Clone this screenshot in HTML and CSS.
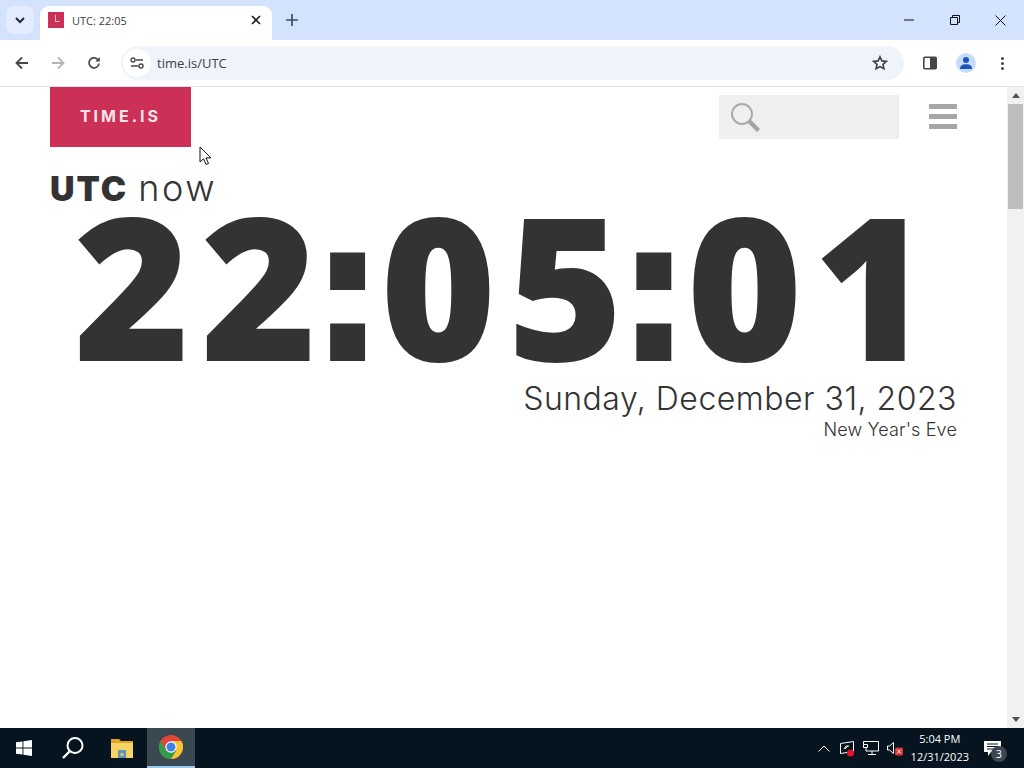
FILE: index.html
```html
<!DOCTYPE html>
<html lang="en">
<head>
    <meta charset="UTF-8">
    <meta name="viewport" content="width=device-width, initial-scale=1.0">
    <title>UTC: 22:05</title>
    <link rel="stylesheet" href="styles.css">
</head>
<body>
    <div class="tabstrip">
        <div class="tab-menu">
            <svg width="12" height="8" viewBox="0 0 12 8"><path d="M2 2l4 4 4-4" fill="none" stroke="#1f2a44" stroke-width="2"/></svg>
        </div>
        <div class="tab">
            <svg class="favicon" width="16" height="16" viewBox="0 0 16 16"><rect width="16" height="16" fill="#cc2f57"/><path d="M7.5 3v6.5h4" fill="none" stroke="#f3c6d2" stroke-width="1"/></svg>
            <span class="tab-title">UTC: 22:05</span>
            <svg class="tab-close" width="10" height="10" viewBox="0 0 10 10"><path d="M1 1l8 8M9 1l-8 8" stroke="#1f1f1f" stroke-width="1.6"/></svg>
        </div>
        <svg class="new-tab" width="12" height="12" viewBox="0 0 12 12"><path d="M6 0v12M0 6h12" stroke="#3d4a68" stroke-width="1.7"/></svg>
        <div class="win-buttons">
            <svg width="10" height="10" viewBox="0 0 10 10"><path d="M0 5h10" stroke="#111" stroke-width="1"/></svg>
            <svg width="10" height="10" viewBox="0 0 10 10"><path d="M.5 2.500h7v7h-7zM2.500 2.500v-2h7v7h-2" fill="none" stroke="#111" stroke-width="1"/></svg>
            <svg width="11" height="11" viewBox="0 0 11 11"><path d="M.5.5l10 10M10.500.5l-10 10" stroke="#111" stroke-width="1"/></svg>
        </div>
    </div>

    <div class="toolbar">
        <svg class="nav-icon" width="14" height="14" viewBox="0 0 14 14"><path d="M13 7H2M7 1.500L1.500 7 7 12.500" fill="none" stroke="#444746" stroke-width="1.800"/></svg>
        <svg class="nav-icon" width="14" height="14" viewBox="0 0 14 14"><path d="M1 7h11M7 1.500L12.500 7 7 12.500" fill="none" stroke="#b3b5b8" stroke-width="1.800"/></svg>
        <svg class="nav-icon" width="14" height="14" viewBox="0 0 14 14"><path d="M12 7.500A5 5 0 1 1 10.500 3.300" fill="none" stroke="#444746" stroke-width="1.700"/><path d="M12.800 1v4.500H8.300z" fill="#444746"/></svg>
        <div class="omnibox">
            <div class="site-icon">
                <svg width="14" height="12" viewBox="0 0 14 12"><circle cx="3" cy="3" r="2" fill="none" stroke="#444746" stroke-width="1.400"/><path d="M6 3h7M1 9h7" stroke="#444746" stroke-width="1.400"/><circle cx="11" cy="9" r="2" fill="none" stroke="#444746" stroke-width="1.400"/></svg>
            </div>
            <span class="url">time.is/UTC</span>
            <svg class="star" width="16" height="16" viewBox="0 0 16 16"><path d="M8 1.800l1.900 4.100 4.400.5-3.300 3 .9 4.400L8 11.600l-3.900 2.200.9-4.400-3.300-3 4.400-.5z" fill="none" stroke="#3c4043" stroke-width="1.600"/></svg>
        </div>
        <svg class="side-panel" width="14" height="14" viewBox="0 0 14 14"><rect x=".8" y="1.300" width="12.400" height="11.400" rx="1" fill="none" stroke="#444746" stroke-width="1.600"/><rect x="7" y="1.300" width="6" height="11.400" fill="#444746"/></svg>
        <div class="avatar">
            <svg width="14" height="14" viewBox="0 0 14 14"><circle cx="7" cy="4" r="3" fill="#1a56b8"/><path d="M1 13c0-3.500 2.500-4.800 6-4.800s6 1.300 6 4.800z" fill="#1a56b8"/></svg>
        </div>
        <div class="dots"><i></i><i></i><i></i></div>
    </div>

    <div class="viewport">
        <div class="page">
            <header class="site-header">
                <a class="logo">TIME.IS</a>
                <div class="header-right">
                    <div class="search">
                        <svg width="32" height="32" viewBox="0 0 32 32"><circle cx="12" cy="12" r="10" fill="none" stroke="#ababab" stroke-width="2"/><path d="M19 19l2-1 9 9-3 3-9-9z" fill="#a3a3a3"/></svg>
                    </div>
                    <div class="hamburger"><i></i><i></i><i></i></div>
                </div>
            </header>
            <h1 class="now"><b>UTC</b> <span>now</span></h1>
            <div class="clock">22<span class="colon">:</span>05<span class="colon">:</span>01</div>
            <div class="date">Sunday, December 31, 2023</div>
            <div class="holiday">New Year's Eve</div>
        </div>
        <div class="scrollbar">
            <span class="arrow-up"></span>
            <div class="thumb"></div>
            <span class="arrow-down"></span>
        </div>
        <svg class="cursor" width="14" height="20" viewBox="0 0 14 20"><path d="M1 1v15l3.500-3.200 2.500 5.700 2.500-1.100-2.500-5.500h5z" fill="#fff" stroke="#111" stroke-width="1"/></svg>
    </div>

    <div class="taskbar">
        <div class="task-left">
            <div class="task-item">
                <svg width="16" height="16" viewBox="0 0 16 16"><path d="M0 2.300l6.500-.9v6.200H0zM7.400 1.300L16 0v7.600H7.400zM0 8.500h6.500v6.100L0 13.700zM7.400 8.500H16V16l-8.600-1.200z" fill="#fff"/></svg>
            </div>
            <div class="task-item">
                <svg width="24" height="24" viewBox="0 0 24 24"><circle cx="14" cy="9.500" r="7.500" fill="none" stroke="#fff" stroke-width="2"/><path d="M9 15l-7 7" stroke="#fff" stroke-width="2.400"/></svg>
            </div>
            <div class="task-item">
                <svg width="22" height="20" viewBox="0 0 22 20"><path d="M0 1h8l2 2h12v5H0z" fill="#e0a526"/><rect y="5" width="22" height="15" fill="#f6d365"/><rect x="7" y="12" width="8" height="8" fill="#5d93b5"/><rect x="9.500" y="15" width="3" height="3" fill="#d9c27a"/></svg>
            </div>
            <div class="task-item active">
                <svg width="24" height="24" viewBox="0 0 24 24">
                    <circle cx="12" cy="12" r="12" fill="#e2463a"/>
                    <path d="M12 24a12 12 0 0 1-10.400-18l6 10.400h9z" fill="#2f9e4b"/>
                    <path d="M12 24a12 12 0 0 0 10.400-18H12l5 10z" fill="#f7c531"/>
                    <circle cx="12" cy="12" r="5.700" fill="#fff"/>
                    <circle cx="12" cy="12" r="4.500" fill="#3f82e8"/>
                </svg>
            </div>
        </div>
        <div class="tray">
            <svg width="12" height="7" viewBox="0 0 12 7"><path d="M.5 6.500L6 1l5.500 5.500" fill="none" stroke="#fff" stroke-width="1"/></svg>
            <svg width="17" height="17" viewBox="0 0 17 17"><path d="M2.500 3.500l13-2v10l-13 2z" fill="none" stroke="#fff" stroke-width="1"/><path d="M6 9l2-3h3M10 6l-3 3" fill="none" stroke="#fff" stroke-width="1"/><circle cx="12.500" cy="13" r="3.500" fill="#e8112d"/></svg>
            <svg width="16" height="15" viewBox="0 0 16 15"><path d="M.5 3.500V.5h5M5.500.5h10v9.500H3v-3M.5 3.500h4v3h-4zM9 10v3M5 13.500h8" fill="none" stroke="#fff" stroke-width="1"/></svg>
            <svg width="16" height="15" viewBox="0 0 16 15"><path d="M.5 5v4h2l4 3.500V1.500L2.500 5z" fill="none" stroke="#fff" stroke-width="1"/><rect x="8" y="6.500" width="8" height="8" rx="1.500" fill="#d8342f"/><path d="M10 8.500l4 4M14 8.500l-4 4" stroke="#fff" stroke-width="1"/></svg>
            <div class="tray-clock">
                <span>5:04 PM</span>
                <span>12/31/2023</span>
            </div>
            <div class="notify">
                <svg width="17" height="15" viewBox="0 0 17 15"><path d="M0 0h17v11H7l-3 4v-4H0z" fill="#fff"/><path d="M3 3h11M3 5.500h11M3 8h7" stroke="#05141f" stroke-width="1"/></svg>
                <span class="notify-count">3</span>
            </div>
        </div>
    </div>
</body>
</html>
```

FILE: styles.css
```css
html, body {
    margin: 0;
    padding: 0;
    height: 100%;
    overflow: hidden;
}
body {
    width: 1024px;
    height: 768px;
    display: flex;
    flex-direction: column;
    font-family: "Open Sans", "Noto Sans", sans-serif;
    background: white;
}

/* browser chrome */
.tabstrip {
    height: 40px;
    flex: none;
    display: flex;
    align-items: flex-end;
    background-color: #d3e3fd;
}
.tab-menu {
    width: 28px;
    height: 28px;
    margin: 0 6px 6px 6px;
    border-radius: 8px;
    background: #e3ecfc;
    display: flex;
    align-items: center;
    justify-content: center;
}
.tab {
    width: 232px;
    height: 34px;
    box-sizing: border-box;
    padding: 0 11px 6px 8px;
    background: white;
    border-radius: 9px 9px 0 0;
    display: flex;
    align-items: center;
}
.tab-title {
    flex: 1;
    margin-left: 8px;
    font-size: 11px;
    color: #3c4043;
}
.new-tab {
    margin: 0 0 14px 14px;
}
.win-buttons {
    margin-left: auto;
    width: 138px;
    height: 40px;
    box-sizing: border-box;
    padding: 0 18px 0 18px;
    display: flex;
    align-items: center;
    justify-content: space-between;
}
.toolbar {
    height: 47px;
    flex: none;
    box-sizing: border-box;
    border-bottom: 1px solid #e1e3e6;
    background: white;
    display: flex;
    align-items: center;
    padding-left: 15px;
}
.nav-icon {
    margin-right: 22px;
}
.omnibox {
    width: 783px;
    height: 34px;
    margin-left: -2px;
    border-radius: 17px;
    background: #eff3fa;
    display: flex;
    align-items: center;
    box-sizing: border-box;
    padding: 0 16px 0 2px;
}
.site-icon {
    width: 28px;
    height: 28px;
    border-radius: 50%;
    background: white;
    display: flex;
    align-items: center;
    justify-content: center;
}
.url {
    flex: 1;
    margin-left: 6px;
    font-size: 13px;
    color: #3c4043;
}
.side-panel {
    margin-left: 19px;
}
.avatar {
    width: 20px;
    height: 20px;
    margin-left: 19px;
    border-radius: 50%;
    background: #c7dcfb;
    display: flex;
    align-items: center;
    justify-content: center;
}
.dots {
    margin-left: 25px;
    display: flex;
    flex-direction: column;
    gap: 2px;
}
.dots i {
    display: block;
    width: 3px;
    height: 3px;
    border-radius: 50%;
    background: #444746;
}

/* page */
.viewport {
    flex: 1;
    position: relative;
    display: flex;
    min-height: 0;
}
.page {
    flex: 1;
    min-width: 0;
    box-sizing: border-box;
    padding: 0 50px;
}
.site-header {
    display: flex;
    justify-content: space-between;
    align-items: flex-start;
}
.logo {
    display: block;
    width: 141px;
    height: 60px;
    line-height: 58px;
    text-align: center;
    background-color: #cc3057;
    color: #f8e4e9;
    font-family: "Inter", sans-serif;
    font-weight: 700;
    font-size: 16px;
    letter-spacing: 3px;
}
.header-right {
    display: flex;
    align-items: flex-start;
    margin-right: -1px;
}
.search {
    width: 180px;
    height: 44px;
    margin-top: 8px;
    background: #efefef;
    display: flex;
    align-items: center;
    padding: 2px 0 0 11px;
    box-sizing: border-box;
}
.hamburger {
    margin: 17px 1px 0 30px;
    display: flex;
    flex-direction: column;
    gap: 5px;
}
.hamburger i {
    display: block;
    width: 28px;
    height: 5px;
    background: #a6a6a6;
}
.now {
    margin: 21px 0 0 0;
    font-family: "Inter", sans-serif;
    font-size: 36px;
    line-height: 40px;
    font-weight: 300;
    color: #333;
}
.now b {
    font-size: 34px;
    font-weight: 900;
    letter-spacing: 2px;
}
.now span {
    letter-spacing: 2.5px;
}
.clock {
    margin: -20px 0 0 24px;
    font-family: "Open Sans", sans-serif;
    font-weight: 800;
    font-size: 198px;
    line-height: 190px;
    letter-spacing: 11px;
    color: #333;
    white-space: nowrap;
}
.colon {
    font-family: "DejaVu Sans", sans-serif;
    font-weight: 700;
    font-size: 198px;
    line-height: 0;
    letter-spacing: 0;
    margin: 0 -7px 0 -20px;
}
.date {
    margin-top: 0;
    text-align: right;
    font-family: "Inter", sans-serif;
    font-weight: 300;
    font-size: 32px;
    line-height: 40px;
    letter-spacing: .5px;
    color: #333;
}
.holiday {
    text-align: right;
    font-family: "Inter", sans-serif;
    font-weight: 300;
    font-size: 18px;
    line-height: 21px;
    letter-spacing: .15px;
    color: #333;
}
.scrollbar {
    width: 17px;
    flex: none;
    background: #f1f1f1;
    display: flex;
    flex-direction: column;
    align-items: center;
    padding-top: 6px;
    box-sizing: border-box;
}
.arrow-up {
    width: 0;
    height: 0;
    border: 4px solid transparent;
    border-top: 0;
    border-bottom: 5px solid #505050;
}
.thumb {
    width: 15px;
    height: 105px;
    margin-top: 6px;
    background: #bdbdbd;
}
.arrow-down {
    margin-top: auto;
    margin-bottom: 6px;
    width: 0;
    height: 0;
    border: 4px solid transparent;
    border-bottom: 0;
    border-top: 5px solid #505050;
}
.cursor {
    position: absolute;
    left: 199px;
    top: 59px;
}

/* windows taskbar */
.taskbar {
    height: 40px;
    flex: none;
    background-color: #05141f;
    display: flex;
    justify-content: space-between;
}
.task-left {
    display: flex;
}
.task-item {
    width: 48px;
    height: 40px;
    margin-right: 1px;
    box-sizing: border-box;
    display: flex;
    align-items: center;
    justify-content: center;
}
.task-item.active {
    background: #3a4852;
    border-bottom: 2px solid #9cc8ee;
}
.tray {
    display: flex;
    align-items: center;
    gap: 8px;
    padding-right: 23px;
}
.tray-clock {
    display: flex;
    flex-direction: column;
    align-items: center;
    color: white;
    font-size: 11px;
    line-height: 18px;
}
.notify {
    position: relative;
    margin-left: 7px;
    display: flex;
}
.notify-count {
    position: absolute;
    left: 7px;
    top: 5px;
    width: 16px;
    height: 16px;
    border-radius: 50%;
    background: #3c4650;
    color: white;
    font-size: 11px;
    line-height: 16px;
    text-align: center;
}
```
